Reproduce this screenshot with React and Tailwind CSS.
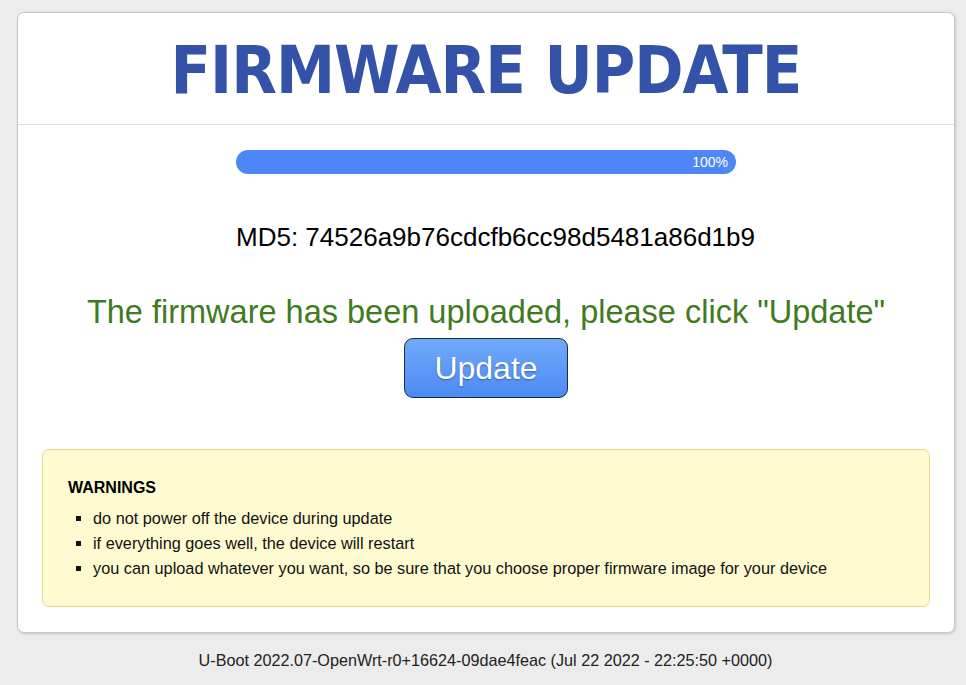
export default function App() {
  return (
    <div className="min-h-[685px] bg-[#ececec] pt-[12px] font-['Liberation_Sans',Arial,sans-serif]">
      <div className="ml-[17px] w-[938px] rounded-[7px] border border-[#c8c8c8] bg-white shadow-[1px_1px_3px_rgba(0,0,0,0.15)]">
        <div className="flex h-[112px] items-center justify-center border-b border-[#e0e0e0] pt-[4px]">
          <h1 className="font-['DejaVu_Sans_Condensed','DejaVu_Sans',Verdana,sans-serif] text-[66px] font-bold leading-none tracking-[-1px] text-[#3352a8]">
            FIRMWARE UPDATE
          </h1>
        </div>
        <div className="flex flex-col items-center pt-[25px]">
          <div className="flex h-[24px] w-[500px] items-center justify-end rounded-full bg-[#4f86f7] pr-[8px]">
            <span className="text-[14px] text-white">100%</span>
          </div>
          <p className="ml-[19px] mt-[48px] text-[26px] leading-[30px] text-black">MD5: 74526a9b76cdcfb6cc98d5481a86d1b9</p>
          <p className="mt-[42px] text-[32.5px] leading-[36px] text-[#3f7b1f]">
            The firmware has been uploaded, please click "Update"
          </p>
          <button className="mt-[8px] h-[60px] w-[164px] rounded-[9px] border border-[#1c2a44] bg-gradient-to-b from-[#72aafa] to-[#4a8af3] text-[32px] text-white [text-shadow:0_1px_2px_rgba(0,0,0,0.35)]">
            Update
          </button>
          <div className="mb-[25px] mt-[51px] w-[888px] rounded-[7px] border border-[#ead98a] bg-[#fffbd1] px-[25px] pb-[25px] pt-[28px]">
            <p className="text-[16px] font-bold leading-[20px] text-black">WARNINGS</p>
            <ul className="mt-[8px] list-[square] pl-[25px] text-[16.3px] leading-[25px] text-[#111]">
              <li>do not power off the device during update</li>
              <li>if everything goes well, the device will restart</li>
              <li>you can upload whatever you want, so be sure that you choose proper firmware image for your device</li>
            </ul>
          </div>
        </div>
      </div>
      <p className="mt-[17px] pl-[5px] text-center text-[16.2px] leading-[20px] text-[#222]">
        U-Boot 2022.07-OpenWrt-r0+16624-09dae4feac (Jul 22 2022 - 22:25:50 +0000)
      </p>
    </div>
  );
}
